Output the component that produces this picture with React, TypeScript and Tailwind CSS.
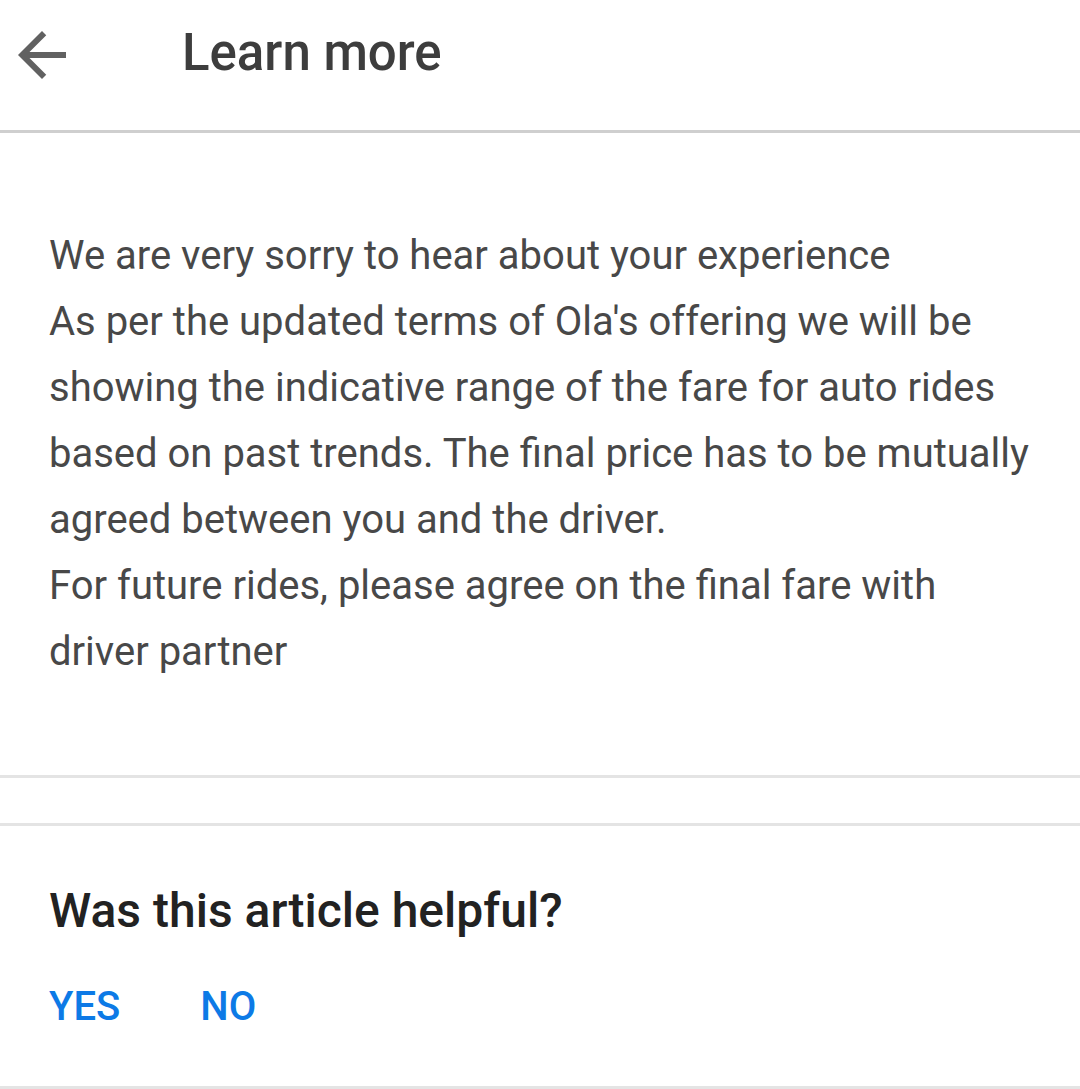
const paragraphs = [
  ["We are very sorry to hear about your experience"],
  [
    "As per the updated terms of Ola's offering we will be",
    "showing the indicative range of the fare for auto rides",
    "based on past trends. The final price has to be mutually",
    "agreed between you and the driver.",
  ],
  ["For future rides, please agree on the final fare with", "driver partner"],
];

function BackArrow() {
  return (
    <svg viewBox="0 0 24 24" className="size-[72px]" fill="currentColor">
      <path d="M20 11H7.83l5.59-5.59L12 4l-8 8 8 8 1.41-1.41L7.83 13H20v-2z" />
    </svg>
  );
}

export default function App() {
  return (
    <div className="min-h-[1089px] w-[1080px] bg-white font-['Roboto',sans-serif]">
      <header className="flex h-[133px] items-center border-b-[3px] border-[#cfcfcf]">
        <button type="button" className="ml-[6px] -mt-[21px] flex size-[72px] items-center justify-center text-[#616161]">
          <BackArrow />
        </button>
        <h1 className="ml-[104px] -mt-[24px] text-[51px] font-medium text-[#3d3d3d]">Learn more</h1>
      </header>

      <section className="border-b-[3px] border-[#e4e4e4] pl-[49px] pt-[90px] pb-[90px]">
        {paragraphs.map((p) => (
          <p key={p[0]} className="text-[40px] leading-[66px] whitespace-nowrap text-[#484848]">
            {p.map((line, i) => (
              <span key={line}>
                {i > 0 && <br />}
                {line}
              </span>
            ))}
          </p>
        ))}
      </section>

      <div className="h-[45px]" />

      <section className="border-y-[3px] border-[#e4e4e4] px-[49px] pt-[57px] pb-[57px]">
        <h2 className="text-[48px] leading-[56px] font-medium text-[#222]">Was this article helpful?</h2>
        <div className="mt-[46px] flex gap-[80px] text-[40px] leading-[44px] font-medium text-[#0d7ae6]">
          <button type="button">YES</button>
          <button type="button">NO</button>
        </div>
      </section>
    </div>
  );
}
